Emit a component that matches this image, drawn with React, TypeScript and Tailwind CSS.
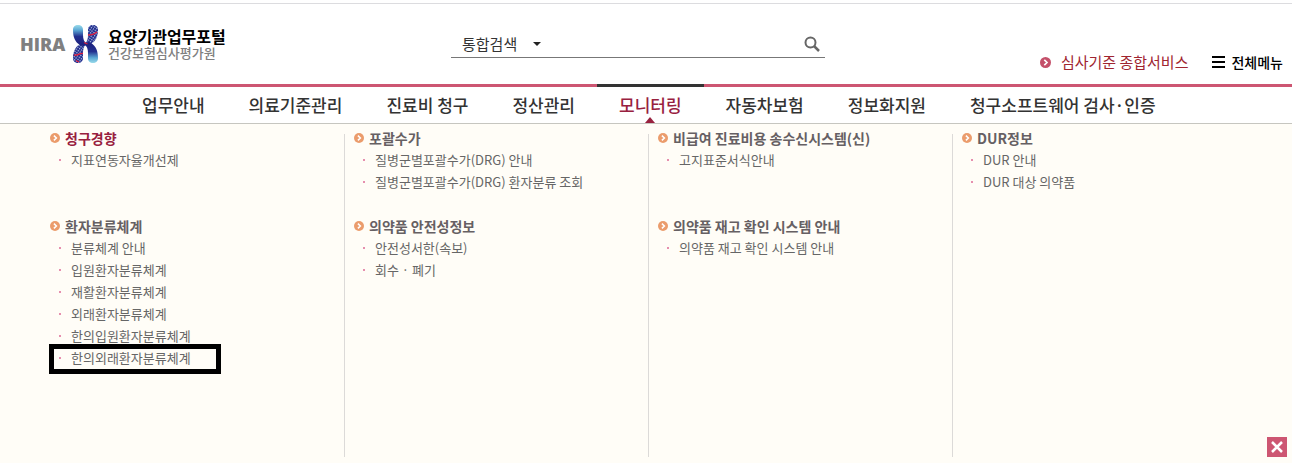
import { useState } from "react";

const navItems = [
  "업무안내",
  "의료기준관리",
  "진료비 청구",
  "정산관리",
  "모니터링",
  "자동차보험",
  "정보화지원",
  "청구소프트웨어 검사·인증",
];

type Group = { title: string; items: string[]; active?: boolean };

const columns: Group[][] = [
  [
    { title: "청구경향", items: ["지표연동자율개선제"], active: true },
    {
      title: "환자분류체계",
      items: [
        "분류체계 안내",
        "입원환자분류체계",
        "재활환자분류체계",
        "외래환자분류체계",
        "한의입원환자분류체계",
        "한의외래환자분류체계",
      ],
    },
  ],
  [
    { title: "포괄수가", items: ["질병군별포괄수가(DRG) 안내", "질병군별포괄수가(DRG) 환자분류 조회"] },
    { title: "의약품 안전성정보", items: ["안전성서한(속보)", "회수 · 폐기"] },
  ],
  [
    { title: "비급여 진료비용 송수신시스템(신)", items: ["고지표준서식안내"] },
    { title: "의약품 재고 확인 시스템 안내", items: ["의약품 재고 확인 시스템 안내"] },
  ],
  [{ title: "DUR정보", items: ["DUR 안내", "DUR 대상 의약품"] }],
];

const highlighted = "한의외래환자분류체계";

function ArrowDot({ className }: { className: string }) {
  return (
    <svg viewBox="0 0 10 10" className={className} aria-hidden="true">
      <circle cx="5" cy="5" r="5" fill="currentColor" />
      <path d="M3.9 2.6 6.4 5 3.9 7.4" fill="none" stroke="#fff" strokeWidth="1.5" />
    </svg>
  );
}

function LogoMark() {
  return (
    <svg viewBox="0 0 27 38" className="w-[27px] h-[38px]" aria-hidden="true">
      <defs>
        <linearGradient id="armTop" x1="0" y1="0" x2="0" y2="1">
          <stop offset="0" stopColor="#9adbea" />
          <stop offset="0.25" stopColor="#5aa7d4" />
          <stop offset="0.55" stopColor="#23308f" />
          <stop offset="1" stopColor="#1b1f7c" />
        </linearGradient>
        <linearGradient id="armBottom" x1="0" y1="1" x2="0" y2="0">
          <stop offset="0" stopColor="#9adbea" />
          <stop offset="0.25" stopColor="#5aa7d4" />
          <stop offset="0.55" stopColor="#23308f" />
          <stop offset="1" stopColor="#1b1f7c" />
        </linearGradient>
        <pattern id="mesh" width="2.4" height="2.4" patternUnits="userSpaceOnUse" patternTransform="rotate(35)">
          <rect width="2.4" height="2.4" fill="#20298c" />
          <rect width="1.3" height="1.3" fill="#a9bfe0" />
        </pattern>
      </defs>
      <path d="M26 5c0-3.5-2-5-5-5s-5 1.5-5 5v5c0 3-.5 6-3 9 2 1.5 4 1.500 6 0 5-3 7-8 7-14Z" fill="url(#mesh)" />
      <path d="M1 33c0 3.500 2 5 5 5s5-1.500 5-5v-5c0-3 .5-6 3-9-2-1.500-4-1.500-6 0-5 3-7 8-7 14Z" fill="url(#mesh)" />
      <path d="M1 5C1 1.500 3 0 6 0s5 1.500 5 5v5c0 4 1 7 4 9-1 2-4 2.500-7 1C3 17 1 12 1 5Z" fill="url(#armTop)" />
      <path d="M26 33c0 3.500-2 5-5 5s-5-1.500-5-5v-5c0-4-1-7-4-9 1-2 4-2.500 7-1 5 3 7 8 7 15Z" fill="url(#armBottom)" />
      <path d="M16 10c3-.5 5 .5 9-3M12 17.500l3.500 1.500M2 30c4 1 5-2 9-1.500M4 35.500l3 1.500" fill="none" stroke="#e01f3d" strokeWidth="1.300" />
    </svg>
  );
}

function MenuGroup({ group }: { group: Group }) {
  return (
    <section className="min-h-[88px] leading-[22px]">
      <h2 className={`flex items-center gap-[5px] text-sm font-bold ${group.active ? "text-[#98213f]" : "text-[#666063]"}`}>
        <ArrowDot className="w-[10px] h-[10px] text-[#eb9c6c]" />
        <a href="#">{group.title}</a>
      </h2>
      <ul className="pt-px text-[13px] text-[#666]">
        {group.items.map((item) => (
          <li key={item} className="relative flex items-center gap-[10px] pl-[9px]">
            <span className="w-[2px] h-[2px] bg-[#e68fae]" />
            <a href="#">{item}</a>
            {item === highlighted && (
              <span className="absolute -left-px -top-[3px] w-[172px] h-[30px] border-5 border-black pointer-events-none" />
            )}
          </li>
        ))}
      </ul>
    </section>
  );
}

export default function App() {
  const [current, setCurrent] = useState("모니터링");
  const [open, setOpen] = useState(true);

  return (
    <div className="bg-white pt-[3px] font-['Noto_Sans_CJK_KR',sans-serif]">
      <header className="flex h-[81px] border-t border-[#dcdcdf] pl-5 pr-[9px]">
        <a href="#" className="flex w-[431px] items-center">
          <span className="w-[52px] font-['Open_Sans',sans-serif] text-lg font-extrabold text-[#808080]">HIRA</span>
          <LogoMark />
          <span className="ml-[9px] flex flex-col">
            <span className="text-base leading-[18px] font-bold text-black">요양기관업무포털</span>
            <span className="text-[13px] leading-4 font-medium text-[#808080]">건강보험심사평가원</span>
          </span>
        </a>

        <form className="mt-[27px] flex h-[27px] w-[374px] items-center border-b border-[#777]" onSubmit={(e) => e.preventDefault()}>
          <select aria-label="검색 구분" className="w-[92px] appearance-none bg-transparent pl-[11px] text-[15px] leading-6 text-[#333]">
            <option>통합검색</option>
          </select>
          <svg viewBox="0 0 8 4" className="-ml-[10px] w-2 h-1 pointer-events-none" aria-hidden="true">
            <path d="M0 0h8L4 4Z" fill="#222" />
          </svg>
          <input type="text" aria-label="검색어" className="min-w-0 flex-1 px-2 text-sm outline-none" />
          <button type="submit" aria-label="검색" className="mr-[5px]">
            <svg viewBox="0 0 16 16" className="w-4 h-4" fill="none" stroke="#666" aria-hidden="true">
              <circle cx="6.500" cy="6.500" r="5" strokeWidth="2" />
              <path d="m10 10 5 5" strokeWidth="2.500" />
            </svg>
          </button>
        </form>

        <div className="ml-auto flex items-center gap-6 self-end pb-[10px] leading-6">
          <a href="#" className="flex items-center gap-[10px] text-[15px] text-[#a02530]">
            <ArrowDot className="w-[11px] h-[11px] text-[#c4506a]" />
            심사기준 종합서비스
          </a>
          <button type="button" className="flex items-center gap-[6px] text-sm font-medium text-black">
            <svg viewBox="0 0 13 12" className="w-[13px] h-3" aria-hidden="true">
              <path d="M0 1h13M0 6h13M0 11h13" stroke="#000" strokeWidth="2" />
            </svg>
            전체메뉴
          </button>
        </div>
      </header>

      <nav className="flex h-10 border-t-3 border-b border-t-[#cd5672] border-b-[#c6c6c0] pl-[120px]">
        {navItems.map((item) => (
          <a
            key={item}
            href="#"
            onClick={() => {
              setCurrent(item);
              setOpen(true);
            }}
            className={`relative -mt-[3px] border-t-3 px-[22px] text-[17px] leading-9 font-medium whitespace-nowrap ${
              item === current ? "border-[#333] text-[#98213f]" : "border-transparent text-[#333]"
            }`}
          >
            {item}
            {item === current && (
              <svg viewBox="0 0 10 6" className="absolute bottom-0 left-1/2 -ml-[5px] w-[10px] h-[6px]" aria-hidden="true">
                <path d="M5 0 10 6H0Z" fill="#98213f" />
              </svg>
            )}
          </a>
        ))}
      </nav>

      {open && (
        <div className="relative grid grid-cols-[304px_304px_304px_1fr] bg-[#fffdf7] pt-[10px] pb-[6px] pl-10">
          {columns.map((groups, i) => (
            <div key={i} className={`min-h-[323px] ${i > 0 ? "border-l border-[#dcdad8] pl-[9px]" : "pl-[10px]"}`}>
              <div className="-mt-[6px]">
                {groups.map((group) => (
                  <MenuGroup key={group.title} group={group} />
                ))}
              </div>
            </div>
          ))}
          <button
            type="button"
            aria-label="닫기"
            onClick={() => setOpen(false)}
            className="absolute right-[5px] bottom-[6px] flex h-5 w-5 items-center justify-center bg-[#cd5672]"
          >
            <svg viewBox="0 0 12 12" className="w-3 h-3" aria-hidden="true">
              <path d="m1 1 10 10M11 1 1 11" stroke="#fff" strokeWidth="2.500" />
            </svg>
          </button>
        </div>
      )}
    </div>
  );
}
